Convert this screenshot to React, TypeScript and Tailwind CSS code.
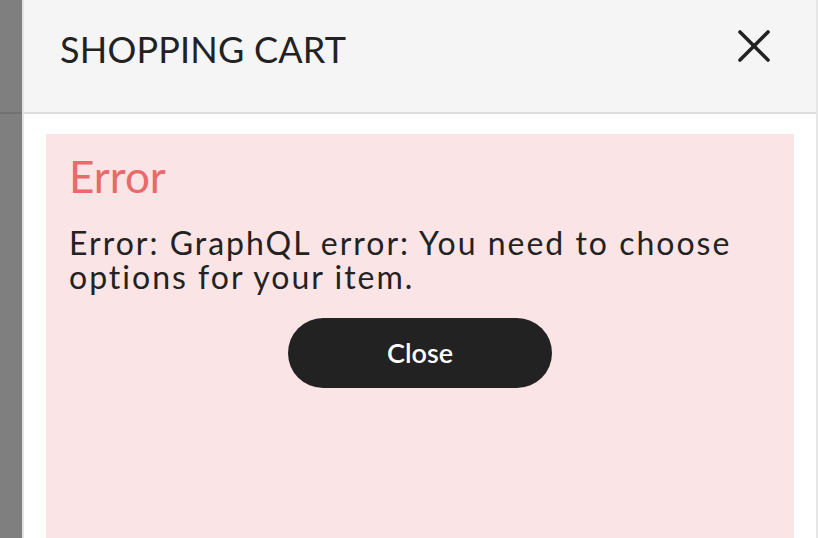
import React from "react";

export default function App() {
  return (
    <div
      className="flex h-[538px] w-[818px] overflow-hidden bg-white"
      style={{ fontFamily: "Lato, 'Noto Sans', sans-serif" }}
    >
      <div className="flex w-[22px] flex-col bg-[#7f7f7f]">
        <div className="h-[112px]" />
        <div className="h-[2px] bg-[#727272]" />
      </div>
      <div className="w-[2px] bg-[#e2e2e2]" />
      <div className="flex flex-1 flex-col">
        <div className="flex h-[114px] items-center justify-between border-b-2 border-[#dddddd] bg-[#f5f5f5] pb-[14px] pl-[36px] pr-[46px]">
          <h2 className="text-[36px] leading-none tracking-[0.2px] text-[#222222]">SHOPPING CART</h2>
          <button className="mb-[6px] flex h-[32px] w-[32px] items-center justify-center text-[#222222]">
            <svg width="32" height="32" viewBox="0 0 32 32" fill="none" stroke="currentColor" strokeWidth="3.6" strokeLinecap="round">
              <path d="M2 2 L30 30" />
              <path d="M30 2 L2 30" />
            </svg>
          </button>
        </div>
        <div className="flex flex-1 flex-col px-[22px] pt-[20px]">
          <div className="flex flex-1 flex-col bg-[#fae4e6] px-[23px] pt-[16px]">
            <h3 className="text-[44px] leading-[1.2] text-[#e96a6a]">Error</h3>
            <p className="mt-[23px] text-[32px] leading-[34px] tracking-[2px] text-[#222222]">
              Error: GraphQL error: You need to choose options for your item.
            </p>
            <div className="mt-[24px] flex justify-center">
              <button className="flex h-[70px] w-[264px] items-center justify-center rounded-full bg-[#222222] text-[27px] font-semibold text-white">
                Close
              </button>
            </div>
          </div>
        </div>
      </div>
      <div className="w-[2px] bg-[#e6e6e6]" />
    </div>
  );
}
